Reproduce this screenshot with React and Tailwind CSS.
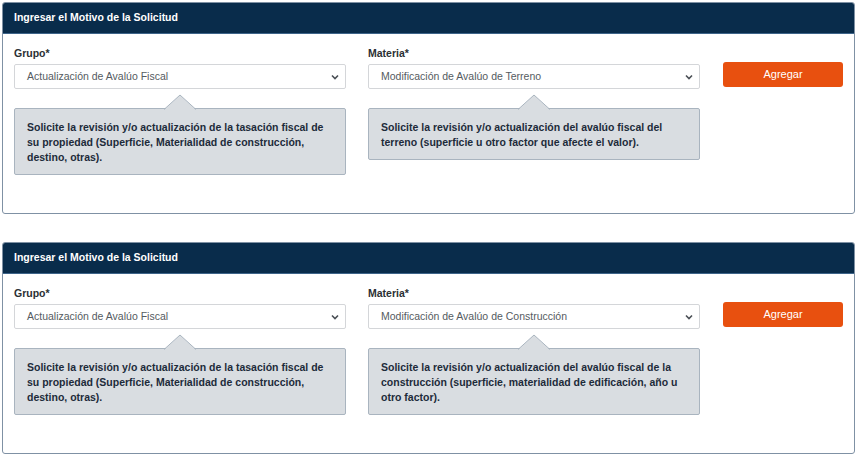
const font = { fontFamily: '"Liberation Sans", Arial, sans-serif' };

function SelectBox({ value }) {
  return (
    <div className="flex h-[25px] items-center justify-between rounded-[2px] border border-[#d4d6d9] bg-white pl-3 pr-[6px] text-[10.5px] text-[#555b61]">
      <span>{value}</span>
      <svg width="8" height="6" viewBox="0 0 8 6" className="text-[#4a4f55]">
        <polyline points="1,1.5 4,4.5 7,1.5" fill="none" stroke="currentColor" strokeWidth="1.6" />
      </svg>
    </div>
  );
}

function Hint({ lines }) {
  return (
    <div className="relative mt-[19px] rounded-[2px] border border-[#a9b4bf] bg-[#d9dde1] pb-[9px] pl-3 pr-3 pt-[11px] text-[10.5px] font-bold leading-[15px] text-[#1d2b3a]">
      <svg
        width="32"
        height="16"
        viewBox="0 0 32 16"
        className="absolute left-1/2 top-[-15px] -translate-x-1/2"
      >
        <polygon points="0,16 16,1 32,16" fill="#d9dde1" />
        <polyline points="0,15.5 16,1 32,15.5" fill="none" stroke="#a9b4bf" strokeWidth="1" />
      </svg>
      {lines.map((l) => (
        <div key={l}>{l}</div>
      ))}
    </div>
  );
}

function Field({ label, value, lines }) {
  return (
    <div className="w-[332px]">
      <div className="mb-[4px] h-[14px] text-[10.5px] font-bold leading-[14px] text-[#2b2f33]">
        {label}
      </div>
      <SelectBox value={value} />
      <Hint lines={lines} />
    </div>
  );
}

function MotivoCard({ materia, materiaLines }) {
  return (
    <section className="w-[853px] overflow-hidden rounded-[3px] border border-[#7f91a4] bg-white">
      <div className="flex h-[31px] items-center border-b border-[#3d6489] bg-[#092c4b] px-[11px] text-[10.5px] font-bold text-white">
        Ingresar el Motivo de la Solicitud
      </div>
      <div className="flex px-[11px] pb-[38px] pt-[12px]">
        <Field
          label="Grupo*"
          value="Actualización de Avalúo Fiscal"
          lines={[
            "Solicite la revisión y/o actualización de la tasación fiscal de",
            "su propiedad (Superficie, Materialidad de construcción,",
            "destino, otras).",
          ]}
        />
        <div className="ml-[22px]">
          <Field label="Materia*" value={materia} lines={materiaLines} />
        </div>
        <div className="ml-[23px] pt-[16px]">
          <button className="flex h-[25px] w-[120px] items-center justify-center rounded-[3px] bg-[#e8500f] text-[11px] text-white">
            Agregar
          </button>
        </div>
      </div>
    </section>
  );
}

export default function App() {
  return (
    <div className="flex min-h-[458px] flex-col gap-[28px] bg-white p-[2px]" style={font}>
      <MotivoCard
        materia="Modificación de Avalúo de Terreno"
        materiaLines={[
          "Solicite la revisión y/o actualización del avalúo fiscal del",
          "terreno (superficie u otro factor que afecte el valor).",
        ]}
      />
      <MotivoCard
        materia="Modificación de Avalúo de Construcción"
        materiaLines={[
          "Solicite la revisión y/o actualización del avalúo fiscal de la",
          "construcción (superficie, materialidad de edificación, año u",
          "otro factor).",
        ]}
      />
    </div>
  );
}
